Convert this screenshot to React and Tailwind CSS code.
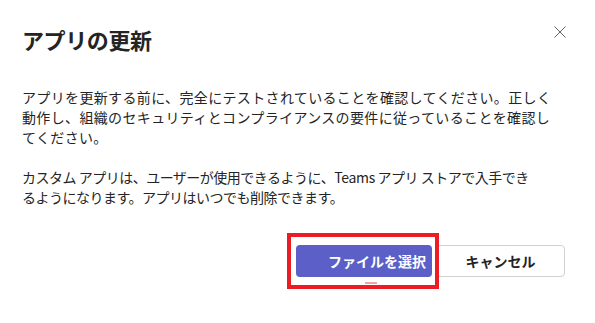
const jp = { fontFamily: '"Noto Sans CJK JP", "Noto Sans", sans-serif' };

const CloseIcon = () => (
  <svg width="12" height="12" viewBox="0 0 12 12" className="text-[#616161]">
    <path d="M0.5 0.5 L11.5 11.5 M11.5 0.5 L0.5 11.5" stroke="currentColor" strokeWidth="1" fill="none" />
  </svg>
);

export default function App() {
  return (
    <div
      className="relative w-[595px] h-[323px] bg-white text-[#242424] overflow-hidden"
      style={jp}
    >
      {/* Header */}
      <div className="flex items-start justify-between pl-[22px] pr-[29px] pt-[25px]">
        <h1 className="text-[22px] leading-[28px] font-semibold tracking-[-0.4px]">
          アプリの更新
        </h1>
        <button className="mt-[1px] p-0">
          <CloseIcon />
        </button>
      </div>

      {/* Body */}
      <div className="pl-[22px] pt-[34px] text-[14px] leading-[20px] whitespace-nowrap">
        <p className="tracking-[0.35px]">
          アプリを更新する前に、完全にテストされていることを確認してください。正しく
          <br />
          動作し、組織のセキュリティとコンプライアンスの要件に従っていることを確認し
          <br />
          てください。
        </p>
        <p className="mt-[20px] tracking-[-0.5px]">
          カスタム アプリは、ユーザーが使用できるように、<span className="tracking-[-0.3px]">Teams</span> アプリ ストアで入手でき
          <br />
          るようになります。アプリはいつでも削除できます。
        </p>
      </div>

      {/* Footer */}
      <div className="flex justify-end gap-[4px] pr-[30px] pt-[38px]">
        <button className="w-[136px] h-[32px] rounded-[4px] bg-[#5b5fc7] text-white text-[14px] font-bold pl-[32px] pr-[6px] text-left">
          ファイルを選択
        </button>
        <button className="w-[129px] h-[32px] rounded-[4px] border border-[#d1d1d1] bg-white text-[#242424] text-[14px] font-bold">
          キャンセル
        </button>
      </div>

      {/* annotation overlay */}
      <div className="absolute left-[287px] top-[233px] w-[152px] h-[56px] border-[4px] border-[#ed1c24] pointer-events-none" />
      <div className="absolute left-[365px] top-[282px] w-[12px] h-[2px] bg-[#f4a3a3]" />
    </div>
  );
}
